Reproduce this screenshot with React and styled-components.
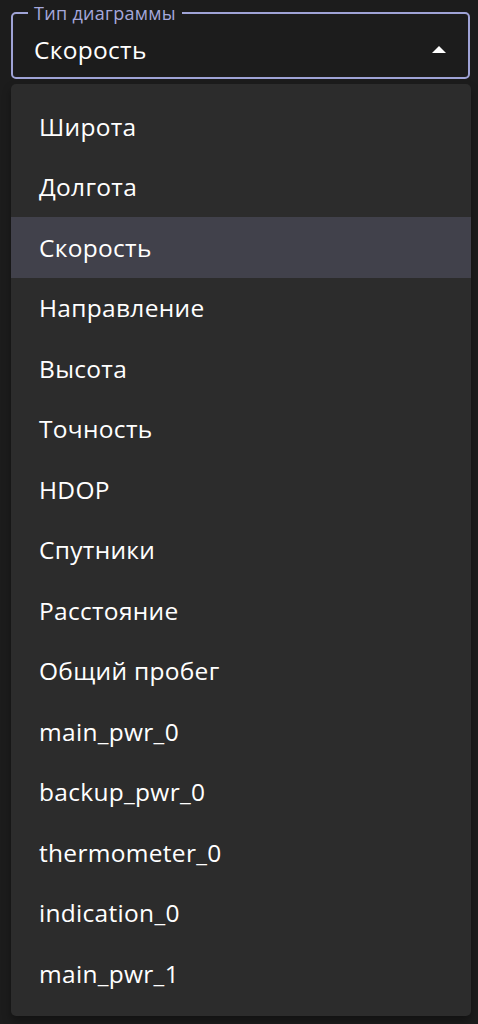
import React, { useState } from "react";
import styled, { createGlobalStyle } from "styled-components";

const OPTIONS = [
  "Широта",
  "Долгота",
  "Скорость",
  "Направление",
  "Высота",
  "Точность",
  "HDOP",
  "Спутники",
  "Расстояние",
  "Общий пробег",
  "main_pwr_0",
  "backup_pwr_0",
  "thermometer_0",
  "indication_0",
  "main_pwr_1",
];

export default function App() {
  const [value, setValue] = useState("Скорость");

  return (
    <>
      <GlobalStyle />
      <Page>
        <SelectBox>
          <Outline>
            <Legend>Тип диаграммы</Legend>
          </Outline>
          <Value>{value}</Value>
          <Arrow viewBox="0 0 14 7">
            <path d="M0 7 L7 0 L14 7 Z" fill="#fff" />
          </Arrow>
        </SelectBox>

        <Menu>
          {OPTIONS.map((opt) => (
            <Item
              key={opt}
              selected={opt === value}
              onClick={() => setValue(opt)}
            >
              {opt}
            </Item>
          ))}
        </Menu>
      </Page>
    </>
  );
}

const GlobalStyle = createGlobalStyle`
  html, body {
    margin: 0;
    padding: 0;
    background: #1c1c1c;
  }
  body {
    font-family: "Open Sans", "Noto Sans", sans-serif;
    color: #fff;
  }
`;

const Page = styled.div`
  width: 478px;
  height: 1024px;
  padding: 14px 7px 0 11px;
  box-sizing: border-box;
  display: flex;
  flex-direction: column;
  gap: 5px;
  overflow: hidden;
`;

// поле выбора
const SelectBox = styled.div`
  position: relative;
  width: 459px;
  height: 65px;
  display: flex;
  align-items: center;
  padding: 6px 24px 0 23px;
  box-sizing: border-box;
`;

const Outline = styled.fieldset`
  position: absolute;
  inset: -10px 0 0 0;
  margin: 0;
  padding: 0 14px;
  border: 2px solid #9fa3d6;
  border-radius: 5px;
  pointer-events: none;
`;

const Legend = styled.legend`
  padding: 0 6px;
  font-size: 18px;
  line-height: 18px;
  letter-spacing: 0.3px;
  color: #a5a8dc;
  margin-left: 1px;
`;

const Value = styled.div`
  flex: 1;
  font-size: 24.5px;
  letter-spacing: 0.3px;
  color: #fff;
`;

const Arrow = styled.svg`
  width: 14px;
  height: 7px;
`;

// выпадающий список
const Menu = styled.ul`
  list-style: none;
  margin: 0;
  padding: 12px 0;
  width: 460px;
  background: #2c2c2c;
  border-radius: 5px;
  box-shadow: 0 5px 8px rgba(0, 0, 0, 0.35);
`;

const Item = styled.li`
  height: 60.5px;
  display: flex;
  align-items: center;
  padding-left: 28px;
  font-size: 24.5px;
  letter-spacing: 0.3px;
  color: #fff;
  background: ${(p) => (p.selected ? "#41414b" : "transparent")};
  cursor: pointer;
`;
